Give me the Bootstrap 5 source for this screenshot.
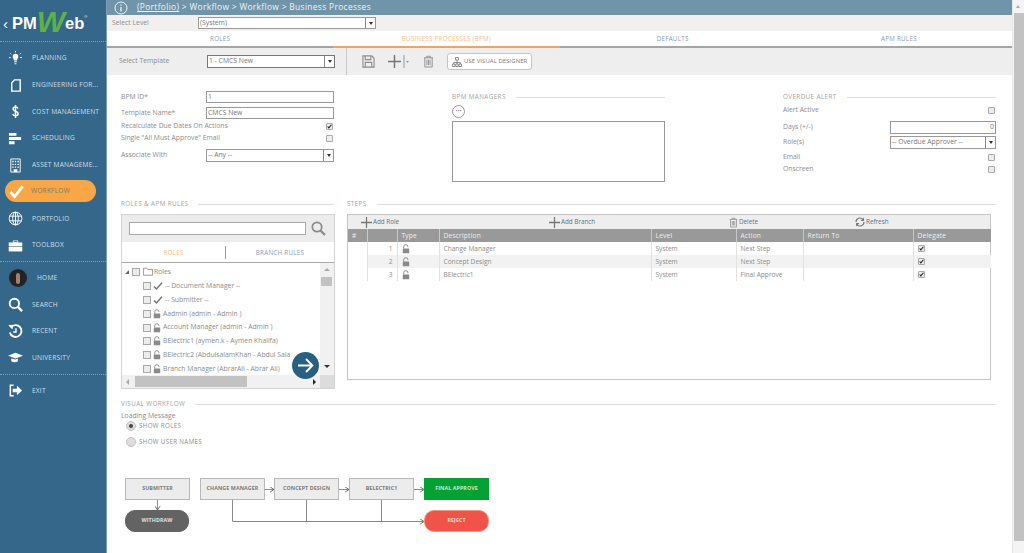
<!DOCTYPE html>
<html lang="en">
<head>
<meta charset="UTF-8">
<title>PMWeb - Business Processes</title>
<link href="https://cdn.jsdelivr.net/npm/bootstrap@5.3.3/dist/css/bootstrap.min.css" rel="stylesheet">
<style>
  html, body { height: 553px; overflow: hidden; }
  body { font-family: "Open Sans", sans-serif; font-size: 6.8px; color: #8c8c8c; background: #fff; line-height: 1.2; }
  .shell { height: 553px; }

  /* sidebar */
  .side { width: 107px; flex: none; background: #34678a; color: #d3dfe7; border-right: 1px solid #7ea0b6; }
  .logo { height: 42px; padding: 13px 0 0 3px; margin-bottom: 3px; border-bottom: 1px dotted #7ea0b6; color: #fff; font-family: "Liberation Sans", sans-serif; font-weight: 700; font-size: 16.5px; line-height: 20px; white-space: nowrap; }
  .logo .dub { color: #5cb247; font-style: italic; font-size: 30px; font-weight: 700; letter-spacing: 0; vertical-align: -3px; line-height: 10px; }
  .logo .back { font-weight: 400; font-size: 15px; margin-right: 4px; }
  .logo sup { font-size: 4px; top: -11px; font-weight: 400; }
  .s-row { height: 26.7px; display: flex; align-items: center; padding-left: 8px; font-size: 6.6px; letter-spacing: .2px; white-space: nowrap; }
  .s-row svg { width: 15px; height: 15px; flex: none; margin-right: 9px; }
  .s-row.on { background: #f9a647; border-radius: 11px; height: 22px; margin: 2px 10px 2.7px 5px; padding-left: 4px; color: #7a7a6a; }
  .s-row.on svg { margin-right: 7px; }
  .s-sep { border-top: 1px dotted #7ea0b6; margin: 2.5px 0; }
  .avatar { width: 18px; height: 18px; border-radius: 50%; background: #232323; flex: none; margin-right: 10px; position: relative; margin-left: 1px; }
  .avatar::after { content: ""; position: absolute; left: 7px; top: 4px; width: 4px; height: 11px; border-radius: 2px; background: #a5806d; }

  /* main */
  .crumb { height: 15px; background: #7094aa; color: #f0f4f6; font-size: 8.4px; letter-spacing: .34px; padding-left: 7px; gap: 9px; }
  .crumb u { text-underline-offset: 1px; }
  .lvl { height: 16px; background: #f2f0ee; padding-left: 5px; }
  .lvl-label { width: 86px; }
  .pick { display: flex; align-items: stretch; background: #fff; border: 1px solid #999; height: 12px; color: #777; }
  .pick span:first-child { flex: 1; padding-left: 1px; line-height: 10px; overflow: hidden; white-space: nowrap; }
  .pick .drop { width: 10px; border-left: 1px solid #888; position: relative; flex: none; }
  .pick .drop::after { content: ""; position: absolute; left: 2.5px; top: 4px; border: 2.5px solid transparent; border-top: 3px solid #333; border-bottom: 0; }
  .tabs { height: 17px; border-bottom: 2px solid #a5a5a5; background: #fff; color: #7f9db3; font-size: 6.2px; letter-spacing: .3px; }
  .tabs > div { flex: 1 1 0; text-align: center; line-height: 15px; position: relative; }
  .tabs .act { color: #f6bd85; }
  .tabs .act::after { content: ""; position: absolute; left: 0; right: 0; bottom: -2px; height: 2px; background: #f0a55c; }
  .tool { height: 27px; background: #eeeeee; }
  .tool-a { width: 240px; padding-left: 12px; border-right: 1px solid #c9c9c9; height: 27px; }
  .tool-a .t-label { width: 88px; }
  .pick.tpl { width: 128px; height: 13px; border-color: #777; }
  .tool-b { padding-left: 15px; }
  .tool-b svg { display: block; }
  .tb-add { margin-left: 13px; gap: 2px; }
  .tb-bin { margin-left: 14px; }
  .visual { border: 1px solid #c4c4c4; background: #fff; border-radius: 3px; height: 17px; padding: 0 4px; margin-left: 13px; font-size: 5.9px; color: #777; letter-spacing: .1px; gap: 2px; white-space: nowrap; }

  .form-zone { padding: 16px 16px 0 14px; height: 125px; }
  .f-col { width: 213px; }
  .head { display: flex; align-items: center; gap: 10px; font-size: 6.3px; letter-spacing: .4px; color: #a3a3a3; height: 8px; white-space: nowrap; }
  .head::after { content: ""; flex: 1; border-top: 1px solid #ddd; }
  .f-row { display: flex; align-items: center; justify-content: space-between; white-space: nowrap; }
  .txt { width: 128px; height: 12px; border: 1px solid #999; background: #fff; padding-left: 1px; line-height: 10px; color: #777; flex: none; }
  .form-check-input.chk { width: 7px; height: 7px; margin: 0 1px 0 0; border: 1px solid #a8a8a8; border-radius: 1px; background-color: #ececec; flex: none; float: none; }
  .form-check-input.chk:checked { background-color: #ececec; border-color: #a8a8a8; background-image: url("data:image/svg+xml,%3csvg xmlns='http://www.w3.org/2000/svg' viewBox='0 0 8 8'%3e%3cpath fill='none' stroke='%23222' stroke-width='1.7' d='M1 4l2 2.2L7 1.2'/%3e%3c/svg%3e"); }
  .dots { width: 13px; height: 13px; border: 1px solid #999; border-radius: 50%; font-size: 7px; line-height: 9px; text-align: center; color: #666; margin: 4px 0 3px; font-weight: 700; }
  .mgr { height: 61px; border: 1px solid #999; background: #fff; }

  .lists { padding: 0 21px 0 14px; gap: 13px; }
  .l-col { width: 213px; flex: none; }
  .r-col { flex: 1; min-width: 0; }
  .r-col .head { margin-right: -5px; }
  .p-roles { border: 1px solid #d3d3d3; height: 175px; margin-top: 6px; background: #fff; position: relative; width: 214px; }
  .p-search { height: 27px; background: #ececec; padding: 0 7px; gap: 5px; }
  .p-search div { width: 177px; height: 13px; border: 1px solid #aaa; background: #fff; }
  .r-tabs { height: 21px; border-bottom: 1px solid #aaa; font-size: 6.2px; letter-spacing: .3px; color: #7f9db3; }
  .r-tabs div { line-height: 13px; text-align: center; }
  .r-tabs div:first-child { width: 104px; color: #f6bd85; border-right: 1px solid #7f9db3; }
  .r-tabs div:last-child { flex: 1; }
  .tree { height: 112px; overflow: hidden; padding-top: 2px; }
  .t-list { flex: 1; min-width: 0; overflow: hidden; white-space: nowrap; }
  .t-item { height: 13.9px; display: flex; align-items: center; padding-left: 21px; gap: 2px; }
  .t-item.root { padding-left: 3px; gap: 3px; }
  .t-item svg { flex: none; }
  .v-bar { width: 14px; flex: none; background: #f1f1f1; position: relative; margin-top: -2px; }
  .v-bar::before { content: ""; position: absolute; left: 1px; top: 14px; width: 11px; height: 9px; background: #c2c2c2; }
  .tri-up, .tri-dn { position: absolute; left: 4px; border: 3px solid transparent; }
  .tri-up { top: 5px; border-bottom-color: #aaa; border-top: 0; }
  .tri-dn { bottom: 7px; border-top-color: #333; border-bottom: 0; }
  .h-bar { height: 13px; background: #f1f1f1; position: relative; margin-right: 14px; }
  .h-bar::before { content: ""; position: absolute; left: 13px; top: 1px; width: 112px; height: 11px; background: #c2c2c2; }
  .h-corner { position: absolute; right: 0; bottom: 0; width: 14px; height: 13px; background: #dcdcdc; }
  .tri-l, .tri-r { position: absolute; top: 4px; border: 3px solid transparent; }
  .tri-l { left: 4px; border-right-color: #aaa; border-left: 0; }
  .tri-r { right: 4px; border-left-color: #222; border-right: 0; }
  .go { position: absolute; left: 170px; top: 137px; width: 27px; height: 27px; border-radius: 50%; background: #28607f; }
  .go svg { display: block; margin: 5px; }

  .p-steps { border: 1px solid #c5c5c5; height: 166px; margin-top: 6px; background: #fff; }
  .s-tool { height: 14px; background: #eee; color: #54748c; font-size: 6.3px; position: relative; }
  .s-tool .tb { position: absolute; top: 0; height: 14px; display: flex; align-items: center; gap: 1px; white-space: nowrap; }
  .table.steps { width: 643px; margin: 0; table-layout: fixed; font-size: 6.6px; color: #8c8c8c; --bs-table-bg: transparent; --bs-table-color: #8c8c8c; }
  .table.steps th { background: #999; color: #f0f0f0; font-weight: 400; height: 13px; padding: 0 0 0 4px; border: 0; border-left: 1px solid #c8c8c8; line-height: 12px; letter-spacing: .2px; }
  .table.steps th:first-child { border-left: 0; }
  .table.steps td { height: 13px; padding: 0 0 0 4px; border: 0; border-left: 1px solid #e2e2e2; line-height: 12px; vertical-align: middle; }
  .table.steps td:first-child { border-left: 0; }
  .table.steps tr.alt td { background: #f2f2f2; }
  .table.steps tr.alt td:first-child, .table.steps td:first-child { background: #fff; }

  .wf-zone { padding: 0 16px 0 14px; margin-top: 11px; }
  .radio-row { display: flex; align-items: center; gap: 3px; height: 16px; padding-left: 5px; font-size: 6.2px; letter-spacing: .35px; color: #8c8c8c; }
  .radio-row.first { margin-top: -2px; }
  .radio { width: 10px; height: 10px; border-radius: 50%; border: 1px solid #c5c5c5; background: #ddd; position: relative; flex: none; }
  .radio.sel::after { content: ""; position: absolute; left: 2px; top: 2px; width: 4px; height: 4px; border-radius: 50%; background: #444; }

  /* diagram canvas */
  .canvas { position: absolute; left: 107px; top: 470px; width: 400px; height: 70px; }
  .canvas svg { position: absolute; left: 0; top: 0; }
  .node { position: absolute; height: 22px; line-height: 19px; text-align: center; font-size: 5.3px; font-weight: 700; letter-spacing: .1px; border: 1.5px solid #b8b8b8; background: #ececec; color: #7b7b7b; white-space: nowrap; }
  .node.ok { background: #05a134; color: #cde9c9; border-color: #05a134; }
  .node.stop { background: #f1524a; color: #fbdcc5; border-color: #e49a7e; border-radius: 10px; }
  .node.wd { background: #636363; color: #e0e0e0; border-color: #636363; border-radius: 10px; }

  .page-bar { width: 12px; flex: none; background: #f4f4f4; position: relative; border-left: 1px solid #e8e8e8; }
  .page-bar::before { content: ""; position: absolute; left: 1px; right: 0; top: 13px; height: 528px; background: #c2c2c2; }
  .page-bar::after { content: ""; position: absolute; left: 3px; top: 5px; border: 2.5px solid transparent; border-bottom: 3px solid #aaa; border-top: 0; }
</style>
</head>
<body>
<svg width="0" height="0" class="position-absolute">
  <defs>
    <symbol id="lock" viewBox="0 0 10 12"><path d="M2.2 5.4V3.2a2.6 2.6 0 0 1 5.2 0v.5" fill="none" stroke="#8a8a8a" stroke-width="1.2"/><rect x="1" y="5.4" width="8" height="6" rx=".5" fill="#8a8a8a"/></symbol>
    <symbol id="tick" viewBox="0 0 12 10"><path d="M1 5.5l3 3.2L11 1" fill="none" stroke="#777" stroke-width="1.8"/></symbol>
    <symbol id="bin" viewBox="0 0 12 14"><path d="M1 3h10M4 3V1.3h4V3M2 3v10h8V3M4.3 5v6M6 5v6M7.7 5v6" fill="none" stroke="#8c8c8c" stroke-width="1"/></symbol>
    <symbol id="plus" viewBox="0 0 14 14"><path d="M7 0v14M0 7h14" stroke="#777" stroke-width="1.6"/></symbol>
    <symbol id="box" viewBox="0 0 8 8"><rect x=".5" y=".5" width="7" height="7" fill="#ececec" stroke="#a8a8a8"/></symbol>
  </defs>
</svg>
<div class="d-flex shell">
  <aside class="side">
    <div class="logo"><span class="back">&lsaquo;</span>PM<span class="dub">W</span>eb<sup>&reg;</sup></div>
    <div class="s-row"><svg viewBox="0 0 16 16"><path d="M5 6a3 3 0 1 1 6 0c0 1.600-1.200 2-1.400 4H6.400C6.200 8 5 7.600 5 6zM6.500 11h3v1h-3zM7 13h2v1H7z" fill="#fff"/><path d="M8 0v1.500M2.500 2.500l1 1M13.500 2.500l-1 1M1 7h2M13 7h2" stroke="#fff"/></svg>PLANNING</div>
    <div class="s-row"><svg viewBox="0 0 16 16"><path d="M7 2h6v12H4V5z" fill="none" stroke="#fff" stroke-width="1.500"/></svg>ENGINEERING FOR...</div>
    <div class="s-row"><svg viewBox="0 0 16 16"><path d="M10.500 5C10.200 3.800 9.200 3.200 8 3.200 6.500 3.200 5.400 4 5.400 5.300c0 3 5.400 1.700 5.400 4.800 0 1.400-1.200 2.400-2.800 2.400-1.400 0-2.500-.6-2.900-1.900M8 1v14" fill="none" stroke="#fff" stroke-width="1.600"/></svg>COST MANAGEMENT</div>
    <div class="s-row"><svg viewBox="0 0 16 16"><path d="M1 2h8v3H1zM1 6.500h13v3H1zM1 11h6v3H1z" fill="#fff"/></svg>SCHEDULING</div>
    <div class="s-row"><svg viewBox="0 0 16 16"><path d="M3 1h10v14H3z" fill="none" stroke="#fff"/><path d="M4.500 3H6v1.500H4.500zM7.200 3h1.500v1.500H7.200zM10 3h1.500v1.500H10zM4.500 6H6v1.500H4.500zM7.200 6h1.500v1.500H7.200zM10 6h1.500v1.500H10zM4.500 9H6v1.500H4.500zM7.200 9h1.500v1.500H7.200zM10 9h1.500v1.500H10zM6 12h4v3H6z" fill="#fff"/></svg>ASSET MANAGEME...</div>
    <div class="s-row on"><svg viewBox="0 0 16 16"><path d="M1.500 8.500l4.500 5L14.500 2.500" fill="none" stroke="#fff" stroke-width="3"/></svg>WORKFLOW</div>
    <div class="s-row"><svg viewBox="0 0 16 16"><g fill="none" stroke="#fff"><circle cx="8" cy="8" r="6.800"/><ellipse cx="8" cy="8" rx="3" ry="6.800"/><path d="M8 1v14M1.500 5.500h13M1.500 10.500h13"/></g></svg>PORTFOLIO</div>
    <div class="s-row"><svg viewBox="0 0 16 16"><path d="M1 5h14v3.500H1zM1 9.500h14V14H1zM5.500 5V3h5v2" fill="#fff" stroke="#fff" stroke-width=".5"/><path d="M6.500 4.500V3.800h3v.7" stroke="#34678a" fill="none"/></svg>TOOLBOX</div>
    <div class="s-sep"></div>
    <div class="s-row"><span class="avatar"></span><span>HOME</span></div>
    <div class="s-row"><svg viewBox="0 0 16 16"><circle cx="6.800" cy="6.800" r="5" fill="none" stroke="#fff" stroke-width="2"/><path d="M10.500 10.500L15 15" stroke="#fff" stroke-width="2.500"/></svg>SEARCH</div>
    <div class="s-row"><svg viewBox="0 0 16 16"><path d="M3 3.800A6.300 6.300 0 1 1 2 9" fill="none" stroke="#fff" stroke-width="2"/><path d="M1 1.500h3.500V5z" fill="#fff" stroke="#fff"/><path d="M8.500 4.500V8.500H5.500" fill="none" stroke="#fff" stroke-width="1.500"/></svg>RECENT</div>
    <div class="s-row"><svg viewBox="0 0 16 16"><path d="M0 6l8-3 8 3-8 3zM3.500 9v3c2 1.400 5 1.400 7 0V9L8 10z" fill="#fff"/></svg>UNIVERSITY</div>
    <div class="s-sep"></div>
    <div class="s-row"><svg viewBox="0 0 16 16"><path d="M6 2.500H2.500v11H6" fill="none" stroke="#fff" stroke-width="1.600"/><path d="M5 6.200h4.500V3L15 8l-5.500 5V9.800H5z" fill="#fff"/></svg>EXIT</div>
  </aside>

  <main class="flex-grow-1 d-flex flex-column position-relative" style="min-width:0">
    <div class="crumb d-flex align-items-center">
      <svg width="14" height="14" viewBox="0 0 14 14" class="flex-shrink-0"><circle cx="7" cy="7" r="6" fill="none" stroke="#f0f4f6"/><path d="M7 3.500v1.300M7 6v4.500" stroke="#f0f4f6" stroke-width="1.300"/></svg>
      <span><u>(Portfolio)</u> &gt; Workflow &gt; Workflow &gt; Business Processes</span>
    </div>
    <div class="lvl d-flex align-items-center">
      <span class="lvl-label">Select Level</span>
      <div class="pick" style="width:178px"><span>(System)</span><span class="drop"></span></div>
    </div>
    <div class="tabs d-flex">
      <div>ROLES</div><div class="act">BUSINESS PROCESSES (BPM)</div><div>DEFAULTS</div><div>APM RULES</div>
    </div>
    <div class="tool d-flex align-items-center">
      <div class="tool-a d-flex align-items-center">
        <span class="t-label">Select Template</span>
        <div class="pick tpl"><span>1 - CMCS New</span><span class="drop"></span></div>
      </div>
      <div class="tool-b d-flex align-items-center">
        <svg width="13" height="13" viewBox="0 0 14 14"><path d="M1 1h9.500L13 3.500V13H1zM3.500 1v4h6V1M3.500 13V8h7v5" fill="none" stroke="#8c8c8c" stroke-width="1.200"/></svg>
        <span class="tb-add d-flex align-items-center"><svg width="13" height="13"><use href="#plus"/></svg><svg width="6" height="13" viewBox="0 0 6 13"><path d="M1 0v13" stroke="#7f9db3"/><path d="M3 6h3L4.500 8z" fill="#7f9db3"/></svg></span>
        <svg class="tb-bin" width="11" height="13"><use href="#bin"/></svg>
        <div class="visual d-flex align-items-center"><svg width="10" height="10" viewBox="0 0 10 10"><path d="M3.500 .5h3v2.500h-3zM.5 7h2.500v2.500H.5zM3.800 7h2.500v2.500H3.800zM7 7h2.500v2.500H7zM5 3v2.500M1.700 7V5.500h6.600V7M5 5.500V7" fill="none" stroke="#777" stroke-width=".8"/></svg>USE VISUAL DESIGNER</div>
      </div>
    </div>

    <div class="form-zone d-flex justify-content-between">
      <div class="f-col">
        <div class="f-row" style="margin-bottom:4px"><span>BPM ID*</span><div class="txt">1</div></div>
        <div class="f-row" style="margin-bottom:1px"><span>Template Name*</span><div class="txt">CMCS New</div></div>
        <div class="f-row" style="height:12px"><span>Recalculate Due Dates On Actions</span><input class="form-check-input chk" type="checkbox" checked aria-label="Recalculate"></div>
        <div class="f-row" style="height:13px"><span>Single "All Must Approve" Email</span><input class="form-check-input chk" type="checkbox" aria-label="Single"></div>
        <div class="f-row" style="margin-top:4px"><span>Associate With</span><div class="pick" style="width:128px;height:13px"><span>-- Any --</span><span class="drop"></span></div></div>
      </div>
      <div class="f-col">
        <div class="head" style="margin-top:2px">BPM MANAGERS</div>
        <div class="dots">&middot;&middot;&middot;</div>
        <div class="mgr"></div>
      </div>
      <div class="f-col">
        <div class="head" style="margin-top:2px">OVERDUE ALERT</div>
        <div class="f-row" style="height:14px;margin-top:2px"><span>Alert Active</span><input class="form-check-input chk" type="checkbox" aria-label="Alert Active"></div>
        <div class="f-row" style="margin-top:3px;height:15px"><span>Days (+/-)</span><div class="txt text-end" style="width:106px;height:13px;padding-right:1px">0</div></div>
        <div class="f-row" style="height:15px"><span>Role(s)</span><div class="pick" style="width:106px;height:13px"><span>-- Overdue Approver --</span><span class="drop"></span></div></div>
        <div class="f-row" style="height:14px"><span>Email</span><input class="form-check-input chk" type="checkbox" aria-label="Email"></div>
        <div class="f-row" style="height:11px"><span>Onscreen</span><input class="form-check-input chk" type="checkbox" aria-label="Onscreen"></div>
      </div>
    </div>

    <div class="lists d-flex">
      <div class="l-col">
        <div class="head">ROLES &amp; APM RULES</div>
        <div class="p-roles">
          <div class="p-search d-flex align-items-center">
            <div></div>
            <svg width="15" height="15" viewBox="0 0 15 15"><circle cx="6" cy="6" r="4.700" fill="none" stroke="#8a8a8a" stroke-width="1.700"/><path d="M9.500 9.500L14 14" stroke="#8a8a8a" stroke-width="2.200"/></svg>
          </div>
          <div class="r-tabs d-flex align-items-center"><div>ROLES</div><div>BRANCH RULES</div></div>
          <div class="tree d-flex">
            <div class="t-list">
              <div class="t-item root"><svg width="4" height="4" viewBox="0 0 5 5"><path d="M0 5h5V0z" fill="#666"/></svg><svg width="8" height="8"><use href="#box"/></svg><svg width="10" height="9" viewBox="0 0 12 10"><path d="M.5 9.500V1h4l1 1.500h6v7z" fill="#fff" stroke="#888"/></svg><span style="margin-left:-2px">Roles</span></div>
              <div class="t-item"><svg width="8" height="8"><use href="#box"/></svg><svg width="10" height="8"><use href="#tick"/></svg><span>-- Document Manager --</span></div>
              <div class="t-item"><svg width="8" height="8"><use href="#box"/></svg><svg width="10" height="8"><use href="#tick"/></svg><span>-- Submitter --</span></div>
              <div class="t-item"><svg width="8" height="8"><use href="#box"/></svg><svg width="8" height="10"><use href="#lock"/></svg><span>Aadmin (admin - Admin )</span></div>
              <div class="t-item"><svg width="8" height="8"><use href="#box"/></svg><svg width="8" height="10"><use href="#lock"/></svg><span>Account Manager (admin - Admin )</span></div>
              <div class="t-item"><svg width="8" height="8"><use href="#box"/></svg><svg width="8" height="10"><use href="#lock"/></svg><span>BElectric1 (aymen.k - Aymen Khalifa)</span></div>
              <div class="t-item"><svg width="8" height="8"><use href="#box"/></svg><svg width="8" height="10"><use href="#lock"/></svg><span>BElectric2 (AbdulsalamKhan - Abdul Sala</span></div>
              <div class="t-item"><svg width="8" height="8"><use href="#box"/></svg><svg width="8" height="10"><use href="#lock"/></svg><span>Branch Manager (AbrarAli - Abrar Ali)</span></div>
            </div>
            <div class="v-bar"><span class="tri-up"></span><span class="tri-dn"></span></div>
          </div>
          <div class="h-bar"><span class="tri-l"></span><span class="tri-r"></span></div>
          <div class="h-corner"></div>
          <div class="go"><svg width="17" height="17" viewBox="0 0 17 17"><path d="M1 8.500h14M9 2l6.500 6.500L9 15" fill="none" stroke="#fff" stroke-width="1.800"/></svg></div>
        </div>
      </div>
      <div class="r-col">
        <div class="head">STEPS</div>
        <div class="p-steps">
          <div class="s-tool">
            <div class="tb" style="left:13px"><svg width="11" height="11"><use href="#plus"/></svg>Add Role</div>
            <div class="tb" style="left:201px"><svg width="11" height="11"><use href="#plus"/></svg>Add Branch</div>
            <div class="tb" style="left:381px"><svg width="9" height="11"><use href="#bin"/></svg>Delete</div>
            <div class="tb" style="left:507px"><svg width="10" height="10" viewBox="0 0 10 10"><path d="M1 5a4 4 0 0 1 7-2.600M9 5a4 4 0 0 1-7 2.600" fill="none" stroke="#777" stroke-width="1.200"/><path d="M9 .5V4H5.500zM1 9.500V6h3.500z" fill="#777"/></svg>Refresh</div>
          </div>
          <table class="table steps">
            <colgroup><col style="width:19px"><col style="width:30px"><col style="width:42px"><col style="width:212px"><col style="width:85px"><col style="width:67px"><col style="width:110px"><col></colgroup>
            <thead><tr><th>#</th><th></th><th>Type</th><th>Description</th><th>Level</th><th>Action</th><th>Return To</th><th>Delegate</th></tr></thead>
            <tbody>
              <tr><td></td><td class="text-end pe-1">1</td><td><svg width="8" height="10" class="d-block"><use href="#lock"/></svg></td><td>Change Manager</td><td>System</td><td>Next Step</td><td></td><td><input class="form-check-input chk d-block" type="checkbox" checked aria-label="Delegate"></td></tr>
              <tr class="alt"><td></td><td class="text-end pe-1">2</td><td><svg width="8" height="10" class="d-block"><use href="#lock"/></svg></td><td>Concept Design</td><td>System</td><td>Next Step</td><td></td><td><input class="form-check-input chk d-block" type="checkbox" checked aria-label="Delegate"></td></tr>
              <tr><td></td><td class="text-end pe-1">3</td><td><svg width="8" height="10" class="d-block"><use href="#lock"/></svg></td><td>BElectric1</td><td>System</td><td>Final Approve</td><td></td><td><input class="form-check-input chk d-block" type="checkbox" checked aria-label="Delegate"></td></tr>
            </tbody>
          </table>
        </div>
      </div>
    </div>

    <div class="wf-zone">
      <div class="head">VISUAL WORKFLOW</div>
      <div style="margin-top:4px;height:8px;line-height:8px">Loading Message</div>
      <div class="radio-row first"><span class="radio sel"></span>SHOW ROLES</div>
      <div class="radio-row"><span class="radio"></span>SHOW USER NAMES</div>
    </div>
  </main>
  <div class="page-bar"></div>
</div>

<div class="canvas">
  <svg width="400" height="70" viewBox="0 0 400 70">
    <defs><marker id="ah" markerWidth="5" markerHeight="6" refX="4.500" refY="3" orient="auto"><path d="M0 0l4.500 3L0 6" fill="none" stroke="#777" stroke-width="1"/></marker></defs>
    <g fill="none" stroke="#8a8a8a" stroke-width="1">
      <path d="M157 19.500h10" marker-end="url(#ah)"/>
      <path d="M232 19.500h10" marker-end="url(#ah)"/>
      <path d="M306 19.500h11" marker-end="url(#ah)"/>
      <path d="M50.500 30v10" marker-end="url(#ah)"/>
      <path d="M125.500 30v21.500H317" marker-end="url(#ah)"/>
      <path d="M199.500 30v21.500M274.500 30v21.500"/>
    </g>
  </svg>
  <div class="node" style="left:18px;top:8px;width:65px">SUBMITTER</div>
  <div class="node" style="left:93px;top:8px;width:65px">CHANGE MANAGER</div>
  <div class="node" style="left:167px;top:8px;width:65px">CONCEPT DESIGN</div>
  <div class="node" style="left:242px;top:8px;width:65px">BELECTRIC1</div>
  <div class="node ok" style="left:317px;top:8px;width:65px">FINAL APPROVE</div>
  <div class="node wd" style="left:18px;top:40px;width:64px">WITHDRAW</div>
  <div class="node stop" style="left:317px;top:40px;width:65px">REJECT</div>
</div>
<script src="https://cdn.jsdelivr.net/npm/bootstrap@5.3.3/dist/js/bootstrap.bundle.min.js"></script>
</body>
</html>
